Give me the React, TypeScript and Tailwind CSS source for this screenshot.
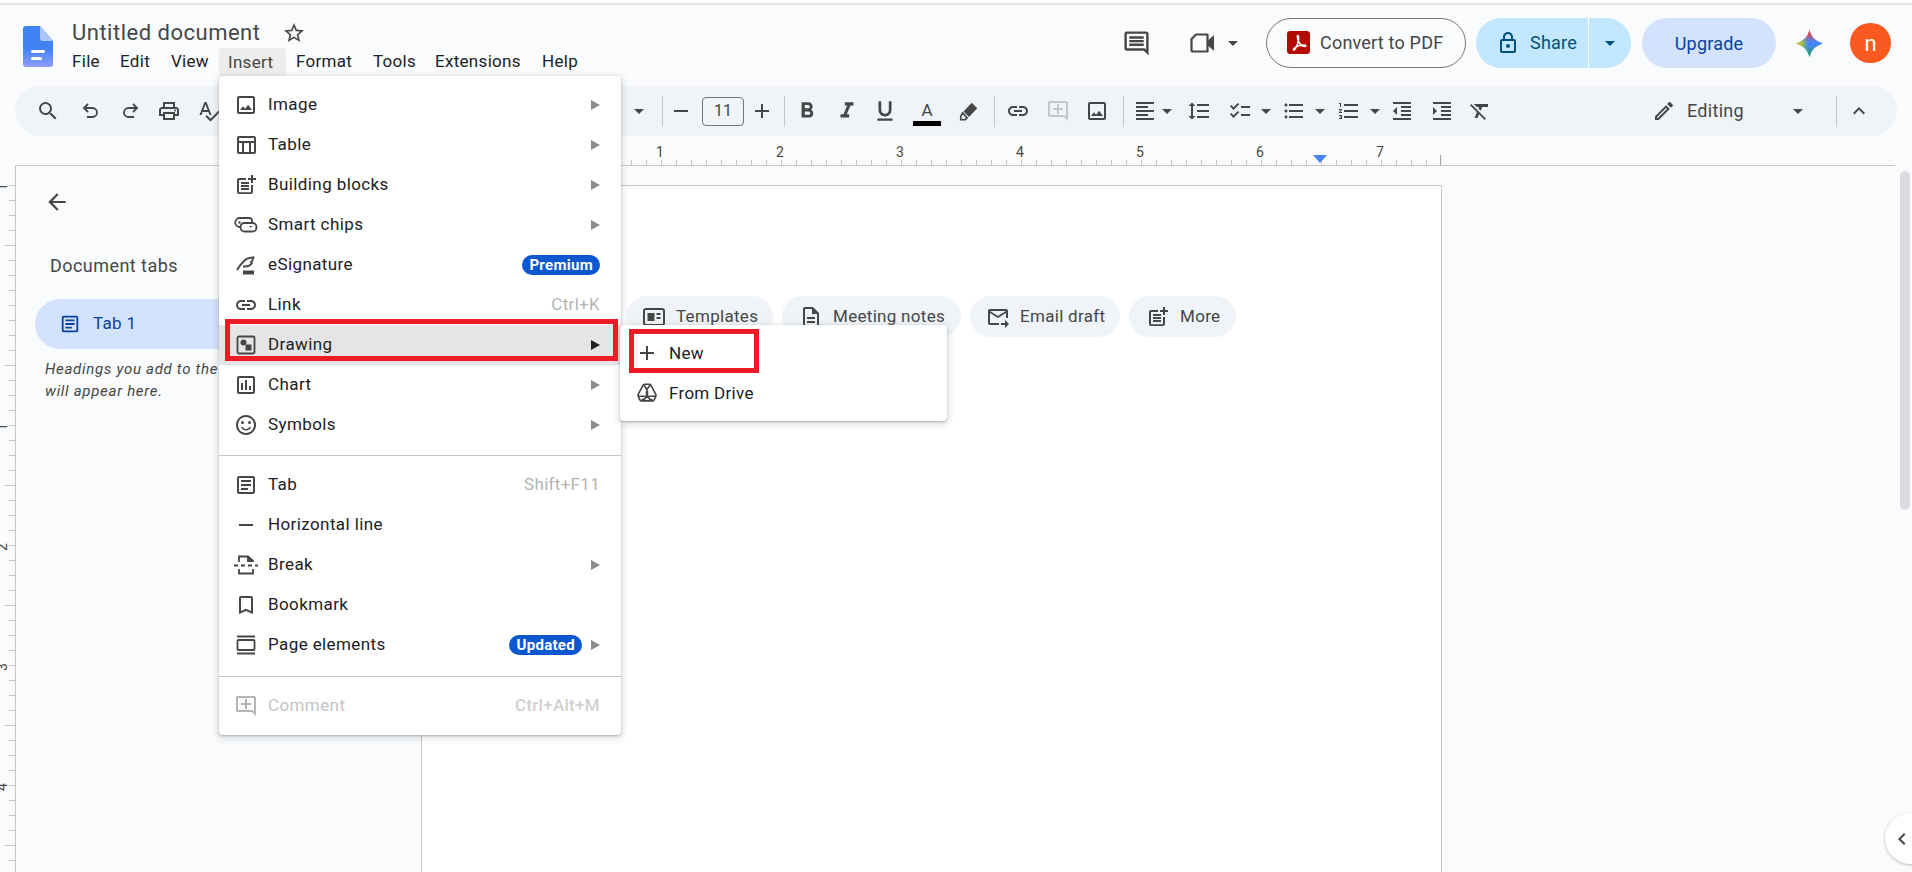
import type { ReactNode } from "react";
import {
  MdAdd,
  MdArrowBack,
  MdArrowDropDown,
  MdBookmarkBorder,
  MdChecklist,
  MdChevronLeft,
  MdExpandLess,
  MdFormatAlignLeft,
  MdFormatBold,
  MdFormatClear,
  MdFormatIndentDecrease,
  MdFormatIndentIncrease,
  MdFormatItalic,
  MdFormatLineSpacing,
  MdFormatListBulleted,
  MdFormatListNumbered,
  MdFormatUnderlined,
  MdLink,
  MdOutlineAddComment,
  MdOutlineArticle,
  MdOutlineDescription,
  MdOutlineEdit,
  MdOutlineForwardToInbox,
  MdOutlineImage,
  MdOutlineInsertChart,
  MdOutlineInsertComment,
  MdOutlineLock,
  MdOutlinePostAdd,
  MdOutlinePrint,
  MdOutlineSentimentSatisfiedAlt,
  MdOutlineTableChart,
  MdRemove,
  MdSearch,
  MdSpellcheck,
  MdStarBorder,
} from "react-icons/md";

const ink = "#444746";

function DocsLogo() {
  return (
    <svg width="30" height="41" viewBox="0 0 30 41">
      <defs>
        <linearGradient id="docBody" x1="0" y1="0" x2="0" y2="1">
          <stop offset="0.55" stopColor="#3f83f5" />
          <stop offset="1" stopColor="#8f9dfb" />
        </linearGradient>
      </defs>
      <path d="M3 0h14l13 15v23a3 3 0 0 1-3 3H3a3 3 0 0 1-3-3V3a3 3 0 0 1 3-3z" fill="url(#docBody)" />
      <path d="M17 0l13 15H20a3 3 0 0 1-3-3z" fill="#a8c7fa" />
      <rect x="8" y="24" width="14" height="3" rx="1.5" fill="#fff" />
      <rect x="8" y="31" width="11" height="3" rx="1.5" fill="#fff" />
    </svg>
  );
}

const star = "M12 0C13.500 5.500 16 9.500 24 12 16 14.500 13.500 18.500 12 24 10.500 18.500 8 14.500 0 12 8 9.500 10.500 5.500 12 0z";

function Gemini() {
  return (
    <svg width="27" height="27" viewBox="0 0 24 24">
      <defs>
        <linearGradient id="gemLeft" x1="0" y1="0" x2="1" y2="0">
          <stop offset="0.05" stopColor="#f2c230" />
          <stop offset="0.25" stopColor="#9cc24a" />
          <stop offset="0.5" stopColor="#4f9bf0" stopOpacity="0" />
        </linearGradient>
        <linearGradient id="gemTop" x1="0" y1="0" x2="0" y2="1">
          <stop offset="0.15" stopColor="#e5484d" />
          <stop offset="0.45" stopColor="#c0588c" stopOpacity="0" />
        </linearGradient>
        <linearGradient id="gemBottom" x1="0" y1="1" x2="0" y2="0">
          <stop offset="0.12" stopColor="#1f9d6b" />
          <stop offset="0.45" stopColor="#3aa0a0" stopOpacity="0" />
        </linearGradient>
      </defs>
      <path d={star} fill="#4285f4" />
      <path d={star} fill="url(#gemLeft)" />
      <path d={star} fill="url(#gemTop)" />
      <path d={star} fill="url(#gemBottom)" />
    </svg>
  );
}

function PdfIcon() {
  return (
    <svg width="23" height="23" viewBox="0 0 23 23">
      <rect width="23" height="23" rx="3" fill="#b30b00" />
      <path
        d="M10.800 4.500c-1 0-.4 4 1 6.500 1.500 2.500 3.900 4.500 6.200 4.500 1.200 0 1.200-1.500-.5-1.500-3 0-8 1-10.500 3.500-1.300 1.300-.3 2.200.8 1 1.700-2 4.500-9 3.800-12.500-.1-.8-.4-1.500-.8-1.500z"
        fill="none"
        stroke="#fff"
        strokeWidth="1.500"
      />
    </svg>
  );
}

function VideoIcon() {
  return (
    <svg width="27" height="24" viewBox="0 0 27 24">
      <path d="M7 3.500h11.500v17H4a1.500 1.500 0 0 1-1.500-1.500V8z" fill="none" stroke={ink} strokeWidth="2.200" strokeLinejoin="round" />
      <path d="M19 9.500l6-5.500v16l-6-5.500z" fill={ink} />
    </svg>
  );
}

function UndoIcon({ flip = false }: { flip?: boolean }) {
  return (
    <svg width="20" height="20" viewBox="0 0 20 20" fill="none" stroke={ink} strokeWidth="1.800" className={flip ? "-scale-x-100" : ""}>
      <path d="M7 3L3 7l4 4" />
      <path d="M3 7h8.500a4.500 4.500 0 0 1 0 9H6" />
    </svg>
  );
}

function HighlighterIcon() {
  return (
    <svg width="22" height="22" viewBox="0 0 24 24" fill={ink}>
      <path d="M15 3l6 6-9 9.500-6-6z" />
      <path d="M5 14l5 5.500-2 2H3v-3.500z" fill="none" stroke={ink} strokeWidth="1.800" />
    </svg>
  );
}

function SmartChipsIcon() {
  return (
    <svg width="24" height="24" viewBox="0 0 24 24" fill="none" stroke={ink} strokeWidth="1.800">
      <path d="M6 5h9a3 3 0 0 1 3 3v2M6.500 14H5.500a4.500 4.500 0 0 1 .5-9" />
      <rect x="6.500" y="10" width="16" height="8.500" rx="4" />
      <circle cx="5.500" cy="9.500" r="1.200" fill={ink} stroke="none" />
      <path d="M15 13h3.500l-1.750 1.700z" fill={ink} stroke="none" />
    </svg>
  );
}

function SignatureIcon() {
  return (
    <svg width="24" height="24" viewBox="0 0 24 24" fill="none" stroke={ink} strokeWidth="1.800">
      <path d="M3 17c2-3.500 4-6 7-9 2.500-2.500 5.500-3.500 9.500-3.500-.5 2-1 3.500-2.500 4.500l1 1c-1.500 2.500-3.500 3.500-7 3.500H9" />
      <rect x="9" y="17.500" width="11" height="4" fill={ink} stroke="none" />
    </svg>
  );
}

function DrawingIcon() {
  return (
    <svg width="24" height="24" viewBox="0 0 24 24">
      <rect x="3.500" y="3.500" width="17" height="17" rx="1.500" fill="none" stroke={ink} strokeWidth="1.800" />
      <circle cx="9.500" cy="9.500" r="3" fill={ink} />
      <rect x="11.500" y="11.500" width="6" height="6" fill={ink} />
    </svg>
  );
}

function BreakIcon() {
  return (
    <svg width="26" height="24" viewBox="0 0 26 24" fill="none" stroke={ink} strokeWidth="1.800">
      <path d="M6 9V3.500h9l5 4.500V9" />
      <path d="M15 3.500V8h5" fill={ink} />
      <path d="M1 12.500h4M8 12.500h4M15 12.500h4M22 12.500h3" />
      <path d="M6 16v4.500h14V16" />
    </svg>
  );
}

function PageElementsIcon() {
  return (
    <svg width="24" height="24" viewBox="0 0 24 24" fill="none" stroke={ink} strokeWidth="1.800">
      <path d="M3 3.500h18M3 20.500h18" />
      <rect x="3.500" y="7" width="17" height="10" rx="1" />
    </svg>
  );
}

function DriveIcon() {
  return (
    <svg width="22" height="22" viewBox="0 0 24 24" fill="none" stroke={ink} strokeWidth="1.800" strokeLinejoin="round">
      <path d="M9.500 2.500h5a2 2 0 0 1 1.700 1l5.300 9.800a3 3 0 0 1 0 2.700l-1.700 3.500a2 2 0 0 1-1.800 1.100H6a2 2 0 0 1-1.800-1.100l-1.700-3.500a3 3 0 0 1 0-2.700l5.300-9.800a2 2 0 0 1 1.700-1z" />
      <path d="M8.500 3.500c3.500 3.500 5 8 3.500 12H2.500M15.500 3.500c-3.500 3.500-5 8-3.500 12h9.500M5 20.500c3-1 5.500-2.500 7-5 1.500 2.500 4 4 7 5" />
    </svg>
  );
}

function TemplatesIcon() {
  return (
    <svg width="24" height="24" viewBox="0 0 24 24">
      <rect x="2" y="4" width="20" height="16" rx="2" fill="none" stroke={ink} strokeWidth="2" />
      <rect x="5.500" y="8" width="7" height="8" fill={ink} />
      <rect x="14.500" y="8" width="4" height="2" fill={ink} />
      <rect x="14.500" y="12" width="4" height="2" fill={ink} />
    </svg>
  );
}

function Arrow({ dark = false }: { dark?: boolean }) {
  return (
    <svg width="9" height="10" viewBox="0 0 9 10" className="shrink-0">
      <path d="M0 0l9 5-9 5z" fill={dark ? "#202124" : "#8c8c8c"} />
    </svg>
  );
}

function Badge({ children }: { children: ReactNode }) {
  return (
    <span className="flex h-[20px] items-center rounded-full bg-[#0b57d0] px-[7px] text-[15px] font-bold tracking-[0.3px] text-white">
      {children}
    </span>
  );
}

type RowProps = {
  icon: ReactNode;
  label: string;
  hint?: string;
  badge?: string;
  sub?: boolean;
  active?: boolean;
  off?: boolean;
};

function MenuRow({ icon, label, hint, badge, sub, active, off }: RowProps) {
  return (
    <div
      className={`flex h-[40px] items-center pl-[14px] pr-[21px] ${active ? "bg-[#e5e5e5]" : ""} ${off ? "text-[#c4c4c4]" : "text-[#202124]"}`}
    >
      <span className={`flex w-[26px] justify-center ${off ? "opacity-40" : ""}`}>{icon}</span>
      <span className="ml-[9px] flex-1 text-[17px] tracking-[0.4px]">{label}</span>
      {badge && <span className={sub ? "mr-[9px]" : ""}><Badge>{badge}</Badge></span>}
      {hint && <span className={`text-[17px] tracking-[0.3px] ${off ? "font-medium text-[#d0d0d0]" : "text-[#b4b4b4]"}`}>{hint}</span>}
      {sub && <Arrow dark={active} />}
    </div>
  );
}

function Tool({ className, children }: { className: string; children: ReactNode }) {
  return <div className={`flex h-[50px] items-center justify-center [&>svg]:shrink-0 ${className}`}>{children}</div>;
}

function Divider({ className }: { className: string }) {
  return <div className={`h-[31px] w-px bg-[#c7c7c7] ${className}`} />;
}

function Toolbar() {
  const s = { size: 24, color: ink };
  return (
    <div className="mx-[15px] flex h-[50px] items-center rounded-[25px] bg-[#f0f4f9]">
      <Tool className="ml-[13px] w-[40px]"><MdSearch {...s} /></Tool>
      <Tool className="ml-[3px] w-[40px]"><UndoIcon /></Tool>
      <Tool className="w-[38px]"><UndoIcon flip /></Tool>
      <Tool className="w-[40px]"><MdOutlinePrint {...s} /></Tool>
      <Tool className="w-[40px]"><MdSpellcheck {...s} /></Tool>
      <Tool className="ml-[400px] w-[20px]"><MdArrowDropDown {...s} /></Tool>
      <Divider className="ml-[13px]" />
      <Tool className="w-[36px]"><MdRemove {...s} /></Tool>
      <div className="ml-[3px] flex h-[29px] w-[42px] items-center justify-center rounded-[4px] border border-[#747775] text-[16px] text-[#444746]">11</div>
      <Tool className="w-[36px]"><MdAdd {...s} /></Tool>
      <Divider className="ml-[4px]" />
      <Tool className="ml-[2px] w-[40px]"><MdFormatBold size={26} color={ink} /></Tool>
      <Tool className="w-[40px]"><MdFormatItalic size={26} color={ink} /></Tool>
      <Tool className="w-[36px]"><MdFormatUnderlined size={26} color={ink} /></Tool>
      <Tool className="w-[48px] flex-col">
        <span className="mt-[3px] text-[17px] leading-[20px] text-[#444746]">A</span>
        <span className="mt-[1px] h-[5px] w-[28px] bg-black" />
      </Tool>
      <Tool className="w-[36px]"><HighlighterIcon /></Tool>
      <Divider className="ml-[7px]" />
      <Tool className="ml-[3px] w-[40px]"><MdLink {...s} /></Tool>
      <Tool className="w-[40px]"><MdOutlineAddComment size={24} color="#c4c7c5" /></Tool>
      <Tool className="w-[38px]"><MdOutlineImage {...s} /></Tool>
      <Divider className="ml-[7px]" />
      <Tool className="ml-[7px] w-[28px]"><MdFormatAlignLeft {...s} /></Tool>
      <Tool className="w-[16px]"><MdArrowDropDown {...s} /></Tool>
      <Tool className="ml-[4px] w-[40px]"><MdFormatLineSpacing {...s} /></Tool>
      <Tool className="ml-[4px] w-[34px]"><MdChecklist {...s} /></Tool>
      <Tool className="w-[18px]"><MdArrowDropDown {...s} /></Tool>
      <Tool className="ml-[2px] w-[34px]"><MdFormatListBulleted {...s} /></Tool>
      <Tool className="w-[18px]"><MdArrowDropDown {...s} /></Tool>
      <Tool className="ml-[3px] w-[34px]"><MdFormatListNumbered {...s} /></Tool>
      <Tool className="w-[18px]"><MdArrowDropDown {...s} /></Tool>
      <Tool className="w-[36px]"><MdFormatIndentDecrease {...s} /></Tool>
      <Tool className="ml-[4px] w-[36px]"><MdFormatIndentIncrease {...s} /></Tool>
      <Tool className="ml-[2px] w-[36px]"><MdFormatClear {...s} /></Tool>
      <Tool className="ml-[151px] w-[30px]"><MdOutlineEdit {...s} /></Tool>
      <span className="ml-[8px] w-[101px] pb-[1px] text-[18px] tracking-[0.3px] text-[#444746]">Editing</span>
      <Tool className="w-[20px]"><MdArrowDropDown {...s} /></Tool>
      <Divider className="ml-[28px]" />
      <Tool className="ml-[10px] w-[24px]"><MdExpandLess {...s} /></Tool>
    </div>
  );
}

function HRuler() {
  const ticks = [];
  for (let x = 421; x <= 1440; x += 15) {
    const half = (x - 420) % 60 === 0 && (x - 420) % 120 !== 0;
    ticks.push(<line key={x} x1={x + 0.5} x2={x + 0.5} y1={half ? 19 : 24} y2={29} stroke="#c7c7c7" />);
  }
  return (
    <svg width="1912" height="30" className="block">
      {ticks}
      <line x1="1440.500" x2="1440.500" y1="19" y2="29" stroke="#a0a0a0" />
      {[1, 2, 3, 4, 5, 6, 7].map((n) => (
        <text key={n} x={540 + n * 120} y="21" textAnchor="middle" fontSize="14" fontFamily="Roboto" fill="#444746">
          {n}
        </text>
      ))}
      <path d="M1313 19h14l-7 8z" fill="#4285f4" />
      <line x1="15" x2="1895" y1="29.500" y2="29.500" stroke="#c7c7c7" />
    </svg>
  );
}

function VRuler() {
  const ticks = [];
  for (let y = 185; y <= 872; y += 15) {
    const long = (y - 185) % 120 === 60;
    ticks.push(<line key={y} x1={long ? 4 : 9} x2="15" y1={y + 0.5} y2={y + 0.5} stroke="#c7c7c7" />);
  }
  const nums = [
    { n: 1, y: 187 },
    { n: 1, y: 427 },
    { n: 2, y: 547 },
    { n: 3, y: 667 },
    { n: 4, y: 787 },
  ];
  return (
    <svg width="16" height="707" viewBox="0 165 16 707" className="block shrink-0">
      {ticks}
      <line x1="15.500" x2="15.500" y1="165" y2="872" stroke="#c7c7c7" />
      {nums.map(({ n, y }) => (
        <text key={y} x="7" y={y} transform={`rotate(-90 7 ${y})`} textAnchor="middle" fontSize="14" fontFamily="Roboto" fill="#444746">
          {n}
        </text>
      ))}
    </svg>
  );
}

function Chip({ icon, label, className }: { icon: ReactNode; label: string; className: string }) {
  return (
    <div className={`flex h-[41px] items-center rounded-full bg-[#f0f4f9] text-[17px] tracking-[0.3px] text-[#444746] ${className}`}>
      {icon}
      <span className="ml-[10px]">{label}</span>
    </div>
  );
}

export default function App() {
  const m = { size: 24, color: ink };
  const chip = { size: 24, color: ink };
  return (
    <div className="relative h-[872px] w-[1912px] overflow-hidden bg-[#f9fbfd] font-['Roboto',sans-serif]">
      <div className="h-[5px] border-b-2 border-[#e3e3e3] bg-white" />

      {/* Title bar */}
      <header className="flex h-[81px] items-start">
        <div className="ml-[23px] mt-[21px]">
          <DocsLogo />
        </div>
        <div className="ml-[19px] mt-[13px]">
          <div className="flex items-center">
            <span className="text-[22px] leading-[30px] tracking-[0.5px] text-[#444746]">Untitled document</span>
            <span className="ml-[22px]"><MdStarBorder size={24} color={ink} /></span>
          </div>
          <nav className="-ml-[9px] flex h-[28px] items-center text-[17px] tracking-[0.3px] text-[#202124]">
            <span className="w-[48px] pl-[9px]">File</span>
            <span className="w-[51px] pl-[9px]">Edit</span>
            <span className="w-[57px] pl-[9px]">View</span>
            <span className="w-[67px] rounded-t-[4px] bg-[#ededed] pl-[9px] leading-[28px] text-[#444746]">Insert</span>
            <span className="w-[78px] pl-[10px]">Format</span>
            <span className="w-[62px] pl-[9px]">Tools</span>
            <span className="w-[107px] pl-[9px]">Extensions</span>
            <span className="pl-[9px]">Help</span>
          </nav>
        </div>

        <div className="ml-auto mr-[21px] mt-[13px] flex h-[50px] items-center">
          <MdOutlineInsertComment size={29} color={ink} />
          <span className="ml-[38px]"><VideoIcon /></span>
          <MdArrowDropDown size={24} color={ink} className="ml-[5px]" />
          <button className="ml-[21px] flex h-[50px] w-[200px] items-center rounded-full border border-[#747775] pb-[1px] pl-[20px] text-[18px] tracking-[0.2px] text-[#444746]">
            <PdfIcon />
            <span className="ml-[10px] pb-[1px]">Convert to PDF</span>
          </button>
          <div className="ml-[10px] flex h-[50px] w-[155px] items-center rounded-full bg-[#c2e7ff] text-[18px] tracking-[0.2px]">
            <div className="flex h-full w-[113px] items-center border-r border-white pl-[20px]">
              <MdOutlineLock size={24} color="#00527a" />
              <span className="ml-[10px] pb-[1px] text-[#00527a]">Share</span>
            </div>
            <MdArrowDropDown size={24} color="#00527a" className="ml-[9px]" />
          </div>
          <button className="ml-[11px] h-[50px] w-[134px] rounded-full bg-[#d3e3fd] text-[18px] tracking-[0.2px] text-[#0842a0]">Upgrade</button>
          <span className="ml-[20px]"><Gemini /></span>
          <span className="ml-[27px] flex h-[40px] w-[41px] items-center justify-center rounded-full bg-[#fa5a1f] text-[22px] text-white">n</span>
        </div>
      </header>

      <Toolbar />
      <HRuler />

      {/* Workspace */}
      <main className="-mt-px flex h-[707px]">
        <VRuler />
        <aside className="w-[405px] shrink-0">
          <div className="ml-[28px] mt-[24px]"><MdArrowBack size={26} color={ink} /></div>
          <div className="ml-[34px] mt-[38px] text-[18px] leading-[25px] tracking-[0.45px] text-[#444746]">Document tabs</div>
          <div className="ml-[19px] mt-[21px] flex h-[50px] w-[330px] items-center rounded-full bg-[#d3e3fd] pl-[24px] text-[17px] tracking-[0.3px] text-[#0842a0]">
            <MdOutlineArticle size={22} color="#0842a0" />
            <span className="ml-[12px]">Tab 1</span>
          </div>
          <p className="ml-[29px] mt-[9px] text-[15px] italic leading-[22px] tracking-[0.7px] text-[#444746]">
            Headings you add to the document
            <br />
            will appear here.
          </p>
        </aside>
        <section className="mt-[20px] w-[1021px] shrink-0 border-l border-r border-t border-[#c7c7c7] bg-white pl-[204px] pt-[110px]">
          <div className="flex gap-[9px]">
            <Chip className="w-[147px] pl-[16px]" icon={<TemplatesIcon />} label="Templates" />
            <Chip className="w-[179px] pl-[17px]" icon={<MdOutlineDescription {...chip} />} label="Meeting notes" />
            <Chip className="w-[150px] pl-[16px]" icon={<MdOutlineForwardToInbox {...chip} />} label="Email draft" />
            <Chip className="w-[107px] pl-[17px]" icon={<MdOutlinePostAdd {...chip} />} label="More" />
          </div>
        </section>
      </main>

      {/* Scrollbar thumb */}
      <div className="absolute left-[1900px] top-[171px] h-[339px] w-[10px] rounded-full bg-[#dadce0]" />

      {/* Side panel toggle */}
      <div className="absolute left-[1885px] top-[813px] flex h-[51px] w-[51px] items-center rounded-full bg-white pl-[5px] shadow-[0_1px_3px_rgba(60,64,67,0.35)]">
        <MdChevronLeft size={24} color={ink} />
      </div>

      {/* Insert menu */}
      <div className="absolute left-[219px] top-[76px] w-[402px] rounded-[4px] bg-white py-[9px] shadow-[0_2px_6px_2px_rgba(60,64,67,0.15),0_1px_2px_rgba(60,64,67,0.3)]">
        <MenuRow icon={<MdOutlineImage {...m} />} label="Image" sub />
        <MenuRow icon={<MdOutlineTableChart {...m} />} label="Table" sub />
        <MenuRow icon={<MdOutlinePostAdd {...m} />} label="Building blocks" sub />
        <MenuRow icon={<SmartChipsIcon />} label="Smart chips" sub />
        <MenuRow icon={<SignatureIcon />} label="eSignature" badge="Premium" />
        <MenuRow icon={<MdLink {...m} />} label="Link" hint="Ctrl+K" />
        <MenuRow icon={<DrawingIcon />} label="Drawing" sub active />
        <MenuRow icon={<MdOutlineInsertChart {...m} />} label="Chart" sub />
        <MenuRow icon={<MdOutlineSentimentSatisfiedAlt {...m} />} label="Symbols" sub />
        <div className="mb-[9px] mt-[10px] h-px bg-[#c7c7c7]" />
        <MenuRow icon={<MdOutlineArticle {...m} />} label="Tab" hint="Shift+F11" />
        <MenuRow icon={<MdRemove {...m} />} label="Horizontal line" />
        <MenuRow icon={<BreakIcon />} label="Break" sub />
        <MenuRow icon={<MdBookmarkBorder {...m} />} label="Bookmark" />
        <MenuRow icon={<PageElementsIcon />} label="Page elements" badge="Updated" sub />
        <div className="mb-[9px] mt-[11px] h-px bg-[#c7c7c7]" />
        <MenuRow icon={<MdOutlineAddComment {...m} />} label="Comment" hint="Ctrl+Alt+M" off />
      </div>

      {/* Drawing submenu */}
      <div className="absolute left-[620px] top-[325px] w-[327px] rounded-[4px] bg-white py-[8px] shadow-[0_2px_6px_2px_rgba(60,64,67,0.15),0_1px_2px_rgba(60,64,67,0.3)]">
        <div className="flex h-[40px] items-center pl-[15px] text-[17px] tracking-[0.3px] text-[#202124]">
          <MdAdd size={24} color={ink} />
          <span className="ml-[10px] pt-[1px]">New</span>
        </div>
        <div className="flex h-[40px] items-center pl-[15px] text-[17px] tracking-[0.3px] text-[#202124]">
          <span className="flex w-[24px] justify-center"><DriveIcon /></span>
          <span className="ml-[10px] pt-[1px]">From Drive</span>
        </div>
      </div>

      {/* Red callouts drawn over the screenshot */}
      <div className="absolute left-[225px] top-[319px] h-[42px] w-[393px] border-[5px] border-[#ed1c24]" />
      <div className="absolute left-[629px] top-[329px] h-[44px] w-[130px] border-[5px] border-[#ed1c24]" />
    </div>
  );
}
